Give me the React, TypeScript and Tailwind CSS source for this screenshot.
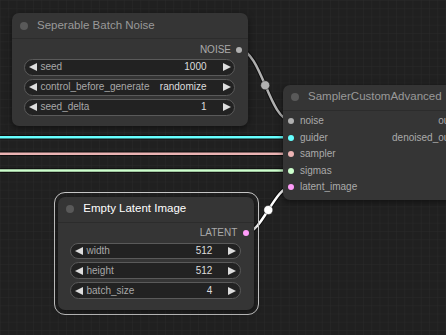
import React from "react";

function ArrowL() {
  return (
    <svg width="8" height="8" viewBox="0 0 8 8" className="shrink-0">
      <path d="M8 0 L0 4 L8 8 Z" fill="#dddddd" />
    </svg>
  );
}
function ArrowR() {
  return (
    <svg width="8" height="8" viewBox="0 0 8 8" className="shrink-0">
      <path d="M0 0 L8 4 L0 8 Z" fill="#dddddd" />
    </svg>
  );
}

function Widget({ label, value }: { label: string; value: string }) {
  return (
    <div className="h-[16.5px] rounded-full bg-[#222222] border border-[#5a5a5a] flex items-center pl-[3.7px] pr-[3.2px] text-[10px] leading-none">
      <ArrowL />
      <span className="ml-[3.5px] text-[#a8a8a8]">{label}</span>
      <span className="ml-auto mr-[16px] text-[#dddddd]">{value}</span>
      <ArrowR />
    </div>
  );
}

function OutSlot({ label, color }: { label: string; color: string }) {
  return (
    <div className="h-[16.5px] flex items-center justify-end pr-[5.7px] text-[10px] leading-none text-[#aaaaaa]">
      <span>{label}</span>
      <span className={`ml-[5.3px] w-[6px] h-[6px] rounded-full ${color}`} />
    </div>
  );
}

function InSlot({ label, color }: { label: string; color: string }) {
  return (
    <div className="h-[16.5px] flex items-center pl-[5.3px] text-[10px] leading-none text-[#aaaaaa]">
      <span className={`w-[6px] h-[6px] rounded-full ${color}`} />
      <span className="ml-[5.7px]">{label}</span>
    </div>
  );
}

export default function App() {
  return (
    <div className="relative w-[446px] h-[335px] overflow-hidden bg-[#202020] font-['Liberation_Sans',Arial,sans-serif]">
      <svg className="absolute inset-0" width="446" height="335" viewBox="0 0 446 335">
        <defs>
          <pattern id="grid" width="8.25" height="8.25" patternUnits="userSpaceOnUse">
            <path d="M8.25 0 L0 0 L0 8.25" fill="none" stroke="#2a2a2a" strokeWidth="1" />
          </pattern>
        </defs>
        <rect width="446" height="335" fill="url(#grid)" />
        {/* straight links */}
        <line x1="0" y1="137.2" x2="290" y2="137.2" stroke="#000" strokeOpacity="0.55" strokeWidth="4.5" />
        <line x1="0" y1="137.2" x2="290" y2="137.2" stroke="#66ffff" strokeWidth="2.5" />
        <line x1="0" y1="153.7" x2="290" y2="153.7" stroke="#000" strokeOpacity="0.55" strokeWidth="4.5" />
        <line x1="0" y1="153.7" x2="290" y2="153.7" stroke="#ecb4b4" strokeWidth="2.5" />
        <line x1="0" y1="170.5" x2="290" y2="170.5" stroke="#000" strokeOpacity="0.55" strokeWidth="4.5" />
        <line x1="0" y1="170.5" x2="290" y2="170.5" stroke="#cdffcd" strokeWidth="2.5" />
        {/* NOISE link */}
        <path d="M239.3 50 C261.3 50 269.3 120.7 291.3 120.7" fill="none" stroke="#000" strokeOpacity="0.55" strokeWidth="4.5" />
        <path d="M239.3 50 C261.3 50 269.3 120.7 291.3 120.7" fill="none" stroke="#b0b0b0" strokeWidth="2.5" />
        <circle cx="265.2" cy="85.3" r="4.5" fill="#b0b0b0" stroke="#000" strokeOpacity="0.4" strokeWidth="1" />
        {/* LATENT link */}
        <path d="M245.3 233.3 C261.7 233.3 274.9 186.7 291.3 186.7" fill="none" stroke="#000" strokeOpacity="0.55" strokeWidth="4.5" />
        <path d="M245.3 233.3 C261.7 233.3 274.9 186.7 291.3 186.7" fill="none" stroke="#ffffff" strokeWidth="2.5" />
        <circle cx="268.3" cy="210" r="4.5" fill="#ffffff" stroke="#000" strokeOpacity="0.4" strokeWidth="1" />
      </svg>

      {/* Seperable Batch Noise */}
      <div className="absolute left-[12px] top-[13px] w-[236px] h-[113px] rounded-[7px] bg-[#353535] shadow-[0_2px_6px_rgba(0,0,0,0.5)]">
        <div className="h-[26px] flex items-center border-b border-[#2c2c2c]">
          <span className="ml-[8px] w-[8px] h-[8px] rounded-full bg-[#595959]" />
          <span className="ml-[9px] text-[11.5px] leading-none text-[#999999]">Seperable Batch Noise</span>
        </div>
        <div className="pt-[2.5px]">
          <OutSlot label="NOISE" color="bg-[#b0b0b0]" />
          <div className="mt-[1px] pl-[12.3px] pr-[13.3px] flex flex-col gap-[3.5px]">
            <Widget label="seed" value="1000" />
            <Widget label="control_before_generate" value="randomize" />
            <Widget label="seed_delta" value="1" />
          </div>
        </div>
      </div>

      {/* SamplerCustomAdvanced */}
      <div className="absolute left-[283px] top-[84.5px] w-[200px] h-[115.5px] rounded-[7px] bg-[#353535] shadow-[0_2px_6px_rgba(0,0,0,0.5)]">
        <div className="h-[26px] flex items-center border-b border-[#2c2c2c]">
          <span className="ml-[8px] w-[8px] h-[8px] rounded-full bg-[#595959]" />
          <span className="ml-[9px] text-[11.5px] leading-none text-[#999999] whitespace-nowrap">SamplerCustomAdvanced</span>
        </div>
        <div className="pt-[2.5px] flex">
          <div className="flex flex-col">
            <InSlot label="noise" color="bg-[#b0b0b0]" />
            <InSlot label="guider" color="bg-[#66ffff]" />
            <InSlot label="sampler" color="bg-[#ecb4b4]" />
            <InSlot label="sigmas" color="bg-[#cdffcd]" />
            <InSlot label="latent_image" color="bg-[#ff9cf9]" />
          </div>
          <div className="ml-auto flex flex-col">
            <OutSlot label="output" color="bg-[#ff9cf9]" />
            <OutSlot label="denoised_output" color="bg-[#ff9cf9]" />
          </div>
        </div>
      </div>

      {/* selection outline */}
      <div className="absolute left-[53.5px] top-[191.5px] w-[205px] h-[123px] rounded-[11px] border-[1.5px] border-[#c8c8c8]" />

      {/* Empty Latent Image */}
      <div className="absolute left-[58.3px] top-[196.7px] w-[196px] h-[113.3px] rounded-[7px] bg-[#353535] shadow-[0_2px_6px_rgba(0,0,0,0.5)]">
        <div className="h-[26px] flex items-center border-b border-[#2c2c2c]">
          <span className="ml-[8px] w-[8px] h-[8px] rounded-full bg-[#595959]" />
          <span className="ml-[9px] text-[11.5px] leading-none text-[#ffffff]">Empty Latent Image</span>
        </div>
        <div className="pt-[2.5px]">
          <OutSlot label="LATENT" color="bg-[#ff9cf9]" />
          <div className="mt-[1px] pl-[12px] pr-[13.7px] flex flex-col gap-[3.3px]">
            <Widget label="width" value="512" />
            <Widget label="height" value="512" />
            <Widget label="batch_size" value="4" />
          </div>
        </div>
      </div>
    </div>
  );
}
